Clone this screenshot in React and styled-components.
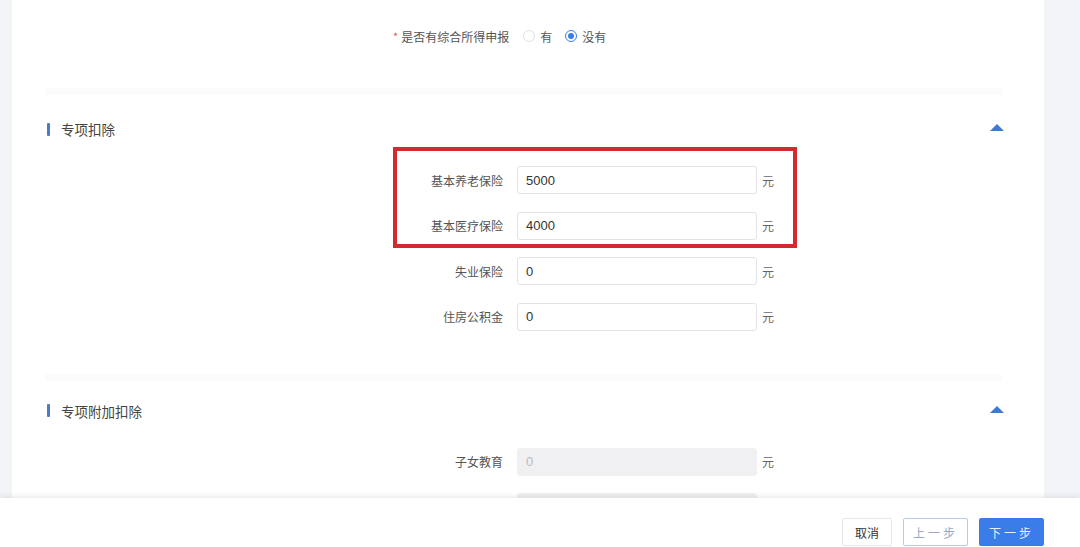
import React from "react";
import styled, { createGlobalStyle } from "styled-components";

const Global = createGlobalStyle`
  html, body { margin: 0; padding: 0; }
  body {
    background: #f3f4f7;
    font-family: "Noto Sans CJK SC", "Noto Sans", "Liberation Sans", sans-serif;
    color: #333;
    overflow: hidden;
  }
  * { box-sizing: border-box; }
`;

const Page = styled.div`
  height: 547px;
  display: flex;
  flex-direction: column;
`;

const Content = styled.div`
  flex: 1;
  overflow: hidden;
  padding: 0 36px 0 12px;
`;

const Panel = styled.div`
  background: #fff;
  min-height: 100%;
`;

const TopBlock = styled.div`
  height: 88px;
  padding-top: 26px;
  padding-left: 381px;
`;

const RadioRow = styled.div`
  display: flex;
  align-items: center;
  height: 20px;
  font-size: 12px;
  color: #555;
`;

const Required = styled.span`
  color: #e0585b;
  margin-right: 3px;
  font-size: 11px;
`;

const RadioLabel = styled.span`
  margin-right: 14px;
`;

const RadioOption = styled.label`
  display: flex;
  align-items: center;
  gap: 5px;
  margin-right: 13px;
  color: #555;
`;

const RadioCircle = styled.span`
  width: 12px;
  height: 12px;
  border-radius: 50%;
  border: 1px solid ${(p) => (p.$checked ? "#3a7de8" : "#e2e2e2")};
  display: flex;
  align-items: center;
  justify-content: center;
  &::after {
    content: "";
    width: 6px;
    height: 6px;
    border-radius: 50%;
    background: ${(p) => (p.$checked ? "#3a7de8" : "transparent")};
  }
`;

const Separator = styled.div`
  height: 7px;
  margin: ${(p) => p.$top || 0}px 42px 0 33px;
  background: #fbfbfc;
`;

const SectionHeader = styled.div`
  display: flex;
  align-items: center;
  height: 20px;
  margin-top: ${(p) => p.$top}px;
  padding: 0 40px 0 35px;
`;

const Bar = styled.span`
  width: 3px;
  height: 13px;
  background: #4a7cc9;
  border-radius: 1px;
  margin-right: 11px;
`;

const Title = styled.span`
  font-size: 13.5px;
  color: #444;
  flex: 1;
`;

const Caret = styled.span`
  width: 0;
  height: 0;
  border-left: 7px solid transparent;
  border-right: 7px solid transparent;
  border-bottom: 7px solid #3d7ad6;
  margin-top: -3px;
`;

const Form = styled.div`
  display: flex;
  flex-direction: column;
  gap: 17.5px;
  margin-top: 27px;
  padding-left: 371px;
`;

const Highlight = styled.div`
  position: relative;
  display: flex;
  flex-direction: column;
  gap: 17.5px;
  width: 392px;
  &::after {
    content: "";
    position: absolute;
    top: -19px;
    bottom: -8px;
    left: 10px;
    right: -22px;
    border: 4px solid #d42a2f;
    pointer-events: none;
  }
`;

const Row = styled.div`
  display: grid;
  grid-template-columns: 120px 240px auto;
  column-gap: 14px;
  align-items: center;
  height: 28px;
`;

const Label = styled.span`
  text-align: right;
  font-size: 12px;
  color: #555;
`;

const Input = styled.div`
  height: 28px;
  border: 1px solid ${(p) => (p.$disabled ? "#f0f0f2" : "#e3e3e6")};
  background: ${(p) => (p.$disabled ? "#f0f0f2" : "#fff")};
  border-radius: 3px;
  padding: 0 8px;
  display: flex;
  align-items: center;
  font-family: "Liberation Sans", "Noto Sans", sans-serif;
  font-size: 13px;
  color: ${(p) => (p.$disabled ? "#bbb" : "#333")};
`;

const Unit = styled.span`
  font-size: 12px;
  color: #666;
  margin-left: -9px;
`;

const Footer = styled.div`
  height: 49px;
  flex-shrink: 0;
  background: #fff;
  box-shadow: 0 -2px 5px rgba(0, 0, 0, 0.08);
  position: relative;
  display: flex;
  justify-content: flex-end;
  align-items: flex-start;
  gap: 11px;
  padding: 20px 36px 0 0;
`;

const Button = styled.button`
  height: 28px;
  width: ${(p) => p.$w}px;
  border-radius: 2px;
  font-family: "Noto Sans CJK SC", sans-serif;
  font-size: 12px;
  letter-spacing: ${(p) => (p.$w > 55 ? "3px" : "0")};
  cursor: pointer;
  border: 1px solid
    ${(p) => (p.$variant === "primary" ? "#3a7de8" : p.$variant === "outline" ? "#b9cbe4" : "#e8e8e8")};
  background: ${(p) => (p.$variant === "primary" ? "#3a7de8" : "#fff")};
  color: ${(p) => (p.$variant === "primary" ? "#e8f0ff" : p.$variant === "outline" ? "#98a8c4" : "#333")};
`;

function Field({ label, value, disabled, unit = true }) {
  return (
    <Row>
      <Label>{label}</Label>
      <Input $disabled={disabled}>{value}</Input>
      {unit ? <Unit>元</Unit> : <span />}
    </Row>
  );
}

export default function App() {
  return (
    <>
      <Global />
      <Page>
        <Content>
          <Panel>
            <TopBlock>
              <RadioRow>
                <Required>*</Required>
                <RadioLabel>是否有综合所得申报</RadioLabel>
                <RadioOption>
                  <RadioCircle />
                  有
                </RadioOption>
                <RadioOption>
                  <RadioCircle $checked />
                  没有
                </RadioOption>
              </RadioRow>
            </TopBlock>
            <Separator />
            <SectionHeader $top={24}>
              <Bar />
              <Title>专项扣除</Title>
              <Caret />
            </SectionHeader>
            <Form>
              <Highlight>
                <Field label="基本养老保险" value="5000" />
                <Field label="基本医疗保险" value="4000" />
              </Highlight>
              <Field label="失业保险" value="0" />
              <Field label="住房公积金" value="0" />
            </Form>
            <Separator $top={43} />
            <SectionHeader $top={20}>
              <Bar />
              <Title>专项附加扣除</Title>
              <Caret />
            </SectionHeader>
            <Form>
              <Field label="子女教育" value="0" disabled />
              <Field label="" value="" disabled unit={false} />
            </Form>
          </Panel>
        </Content>
        <Footer>
          <Button $w={50}>取消</Button>
          <Button $w={65} $variant="outline">上一步</Button>
          <Button $w={65} $variant="primary">下一步</Button>
        </Footer>
      </Page>
    </>
  );
}
